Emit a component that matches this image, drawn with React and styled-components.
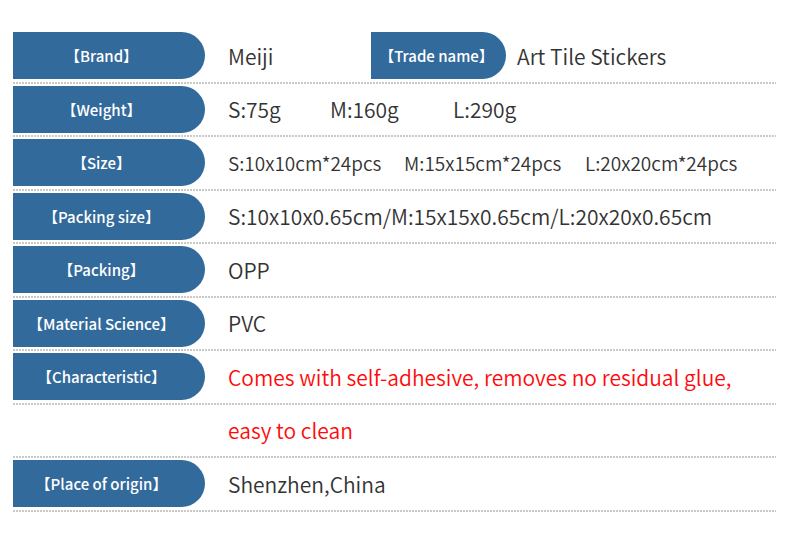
import React from 'react';
import styled, {createGlobalStyle} from 'styled-components';

const GlobalStyle = createGlobalStyle`
    html, body {
        margin: 0;
        padding: 0;
        background: #ffffff;
    }

    body {
        font-family: "Noto Sans CJK SC", "Noto Sans", sans-serif;
    }
`;

const rows = [
    {
        label: 'Brand',
        values: [{text: 'Meiji', width: 143}],
        trade: {label: 'Trade name', value: 'Art Tile Stickers'},
    },
    {
        label: 'Weight',
        values: [{text: 'S:75g', width: 102}, {text: 'M:160g', width: 123}, {text: 'L:290g'}],
    },
    {
        label: 'Size',
        small: true,
        values: [{text: 'S:10x10cm*24pcs', width: 176}, {text: 'M:15x15cm*24pcs', width: 181}, {text: 'L:20x20cm*24pcs'}],
    },
    {label: 'Packing size', values: [{text: 'S:10x10x0.65cm/M:15x15x0.65cm/L:20x20x0.65cm'}]},
    {label: 'Packing', values: [{text: 'OPP'}]},
    {label: 'Material Science', values: [{text: 'PVC'}]},
    {label: 'Characteristic', values: [{text: 'Comes with self-adhesive, removes no residual glue,'}], red: true},
    {label: null, values: [{text: 'easy to clean'}], red: true},
    {label: 'Place of origin', values: [{text: 'Shenzhen,China'}]},
];

const App = () => {
    return (
        <>
            <GlobalStyle/>
            <Page>
                <Table>
                    {rows.map((row, i) => (
                        <Row key={i}>
                            {row.label ? <Label>【{row.label}】</Label> : <LabelSpacer/>}
                            <Values>
                                {row.values.map((v, j) => (
                                    <Value key={j} $width={v.width} $red={row.red} $small={row.small}>
                                        {v.text}
                                    </Value>
                                ))}
                                {row.trade && (
                                    <>
                                        <SubLabel>【{row.trade.label}】</SubLabel>
                                        <TradeValue>{row.trade.value}</TradeValue>
                                    </>
                                )}
                            </Values>
                        </Row>
                    ))}
                </Table>
            </Page>
        </>
    );
};

export default App;

const Page = styled.div`
    width: 790px;
    height: 540px;
    padding: 32px 0 0 13px;
    box-sizing: border-box;
    overflow: hidden;
`;

const Table = styled.div`
    width: 763px;
    display: flex;
    flex-direction: column;
    gap: 2px;
`;

const Row = styled.div`
    display: flex;
    align-items: center;
    padding-bottom: 4.5px;
    background-image: linear-gradient(to right, #c9c9c9 2px, transparent 2px);
    background-size: 3px 2px;
    background-repeat: repeat-x;
    background-position: left bottom;
`;

const Label = styled.div`
    flex: 0 0 192px;
    height: 47px;
    box-sizing: border-box;
    padding-right: 15px;
    display: flex;
    align-items: center;
    justify-content: center;
    background-color: #336a9c;
    border-radius: 0 23.5px 23.5px 0;
    color: #ffffff;
    font-size: 15px;
    font-weight: 500;
    white-space: nowrap;
`;

const LabelSpacer = styled.div`
    flex: 0 0 192px;
    height: 47px;
`;

const Values = styled.div`
    display: flex;
    align-items: center;
    padding-left: 23px;
`;

const Value = styled.span`
    width: ${({$width}) => ($width ? `${$width}px` : 'auto')};
    flex-shrink: 0;
    font-size: ${({$small}) => ($small ? '19px' : '21px')};
    font-weight: 350;
    color: ${({$red}) => ($red ? '#ff0a0a' : '#333333')};
    white-space: nowrap;
`;

const SubLabel = styled.div`
    width: 135px;
    height: 47px;
    box-sizing: border-box;
    padding-right: 4px;
    display: flex;
    align-items: center;
    justify-content: center;
    background-color: #336a9c;
    border-radius: 0 23.5px 23.5px 0;
    color: #ffffff;
    font-size: 15px;
    font-weight: 500;
    white-space: nowrap;
`;

const TradeValue = styled.span`
    margin-left: 11px;
    font-size: 21px;
    font-weight: 350;
    color: #333333;
    white-space: nowrap;
`;
